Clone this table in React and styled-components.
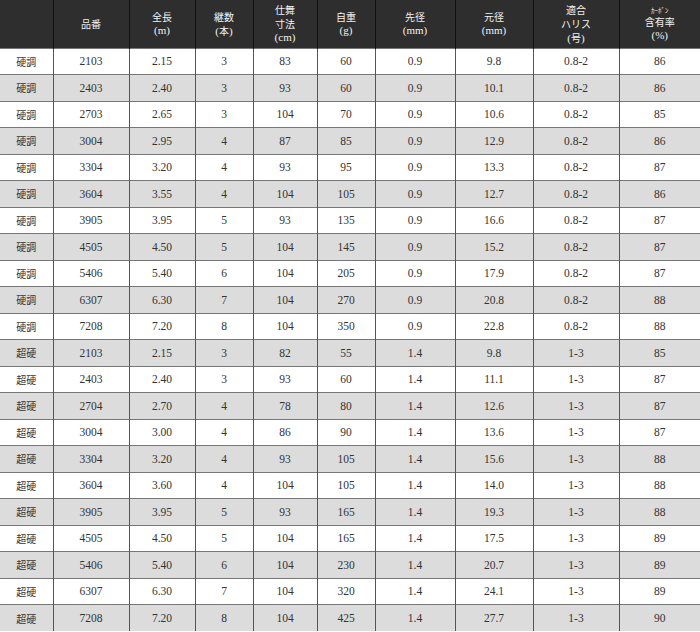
import React from "react";
import styled, { createGlobalStyle } from "styled-components";

const GlobalStyle = createGlobalStyle`
  html, body {
    margin: 0;
    padding: 0;
    background: #ffffff;
  }
`;

const SpecTable = styled.table`
  width: 700px;
  border-collapse: collapse;
  table-layout: fixed;
  font-family: "Liberation Serif", "Noto Sans CJK JP", serif;
  color: #333333;
`;

const HeadRow = styled.tr`
  height: 48px;
  background: #2e2e2e;
`;

const HeadCell = styled.th`
  padding: 0;
  font-weight: normal;
  font-size: 11px;
  line-height: 13px;
  color: #f2f2f2;
  text-align: center;
  vertical-align: middle;
  border-left: 1px solid #111111;
  &:first-child {
    border-left: none;
  }
`;

const Jp = styled.span`
  font-family: "Noto Sans CJK JP", sans-serif;
  font-size: 10px;
`;

const Tiny = styled.span`
  display: block;
  font-family: "Noto Sans CJK JP", sans-serif;
  font-size: 7px;
  line-height: 9px;
`;

const BodyRow = styled.tr`
  height: 26.5px;
  background: ${(props) => (props.shade ? "#dcdcdc" : "#ffffff")};
`;

const Cell = styled.td`
  padding: 0;
  font-size: 11.5px;
  text-align: center;
  vertical-align: middle;
  border-top: 1px solid #777777;
  border-left: 1px solid #555555;
  &:first-child {
    border-left: none;
    font-family: "Noto Sans CJK JP", sans-serif;
    font-size: 10px;
  }
`;

const widths = [53, 76, 66, 58, 64, 58, 80, 78, 86, 81];

const rows = [
  ["硬調", "2103", "2.15", "3", "83", "60", "0.9", "9.8", "0.8-2", "86"],
  ["硬調", "2403", "2.40", "3", "93", "60", "0.9", "10.1", "0.8-2", "86"],
  ["硬調", "2703", "2.65", "3", "104", "70", "0.9", "10.6", "0.8-2", "85"],
  ["硬調", "3004", "2.95", "4", "87", "85", "0.9", "12.9", "0.8-2", "86"],
  ["硬調", "3304", "3.20", "4", "93", "95", "0.9", "13.3", "0.8-2", "87"],
  ["硬調", "3604", "3.55", "4", "104", "105", "0.9", "12.7", "0.8-2", "86"],
  ["硬調", "3905", "3.95", "5", "93", "135", "0.9", "16.6", "0.8-2", "87"],
  ["硬調", "4505", "4.50", "5", "104", "145", "0.9", "15.2", "0.8-2", "87"],
  ["硬調", "5406", "5.40", "6", "104", "205", "0.9", "17.9", "0.8-2", "87"],
  ["硬調", "6307", "6.30", "7", "104", "270", "0.9", "20.8", "0.8-2", "88"],
  ["硬調", "7208", "7.20", "8", "104", "350", "0.9", "22.8", "0.8-2", "88"],
  ["超硬", "2103", "2.15", "3", "82", "55", "1.4", "9.8", "1-3", "85"],
  ["超硬", "2403", "2.40", "3", "93", "60", "1.4", "11.1", "1-3", "87"],
  ["超硬", "2704", "2.70", "4", "78", "80", "1.4", "12.6", "1-3", "87"],
  ["超硬", "3004", "3.00", "4", "86", "90", "1.4", "13.6", "1-3", "87"],
  ["超硬", "3304", "3.20", "4", "93", "105", "1.4", "15.6", "1-3", "88"],
  ["超硬", "3604", "3.60", "4", "104", "105", "1.4", "14.0", "1-3", "88"],
  ["超硬", "3905", "3.95", "5", "93", "165", "1.4", "19.3", "1-3", "88"],
  ["超硬", "4505", "4.50", "5", "104", "165", "1.4", "17.5", "1-3", "89"],
  ["超硬", "5406", "5.40", "6", "104", "230", "1.4", "20.7", "1-3", "89"],
  ["超硬", "6307", "6.30", "7", "104", "320", "1.4", "24.1", "1-3", "89"],
  ["超硬", "7208", "7.20", "8", "104", "425", "1.4", "27.7", "1-3", "90"],
];

const App = () => {
  return (
    <>
      <GlobalStyle />
      <SpecTable>
        <colgroup>
          {widths.map((w, i) => (
            <col key={i} style={{ width: w }} />
          ))}
        </colgroup>
        <thead>
          <HeadRow>
            <HeadCell />
            <HeadCell><Jp>品番</Jp></HeadCell>
            <HeadCell><Jp>全長</Jp><br />(m)</HeadCell>
            <HeadCell><Jp>継数</Jp><br />(<Jp>本</Jp>)</HeadCell>
            <HeadCell><Jp>仕舞</Jp><br /><Jp>寸法</Jp><br />(cm)</HeadCell>
            <HeadCell><Jp>自重</Jp><br />(g)</HeadCell>
            <HeadCell><Jp>先径</Jp><br />(mm)</HeadCell>
            <HeadCell><Jp>元径</Jp><br />(mm)</HeadCell>
            <HeadCell><Jp>適合</Jp><br /><Jp>ハリス</Jp><br />(<Jp>号</Jp>)</HeadCell>
            <HeadCell><Tiny>ｶｰﾎﾞﾝ</Tiny><Jp>含有率</Jp><br />(%)</HeadCell>
          </HeadRow>
        </thead>
        <tbody>
          {rows.map((r, i) => (
            <BodyRow key={i} shade={i % 2 === 1}>
              {r.map((v, j) => (
                <Cell key={j}>{v}</Cell>
              ))}
            </BodyRow>
          ))}
        </tbody>
      </SpecTable>
    </>
  );
};

export default App;
